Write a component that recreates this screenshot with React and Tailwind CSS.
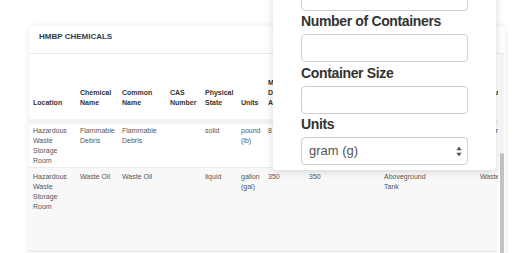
import React from "react";

const W = [
  "w-[47px]",
  "w-[42px]",
  "w-[48px]",
  "w-[35px]",
  "w-[36px]",
  "w-[27px]",
  "w-[41px]",
  "w-[35px]",
  "w-[40px]",
  "w-[52px]",
  "w-[44px]",
  "w-[80px]",
];

const headers = [
  "Location",
  "Chemical Name",
  "Common Name",
  "CAS Number",
  "Physical State",
  "Units",
  "Maximum Daily Amount",
  "Average Daily Amount",
  "Largest Container",
  "Type of Storage",
  "Storage Pressure",
  "Hazardous Materials ID",
];

const rows = [
  [
    "Hazardous Waste Storage Room",
    "Flammable Debris",
    "Flammable Debris",
    "",
    "solid",
    "pound (lb)",
    "8",
    "8",
    "",
    "Aboveground Tank",
    "",
    "Flammable Debris",
  ],
  [
    "Hazardous Waste Storage Room",
    "Waste Oil",
    "Waste Oil",
    "",
    "liquid",
    "gallon (gal)",
    "350",
    "350",
    "",
    "Aboveground Tank",
    "",
    "Waste Oil",
  ],
];

function Label({ children }) {
  return (
    <div className="h-[17px] leading-[17px] text-[14px] font-bold tracking-[-0.35px] text-[#333] mb-[4px]">
      {children}
    </div>
  );
}

function Field({ label }) {
  return (
    <div className="mt-[2.5px]">
      <Label>{label}</Label>
      <div className="h-[28px] rounded-[4px] border border-[#cfcfcf] bg-white" />
    </div>
  );
}

export default function App() {
  return (
    <div
      className="relative w-[525px] h-[253px] overflow-hidden bg-white"
      style={{ fontFamily: '"Liberation Sans", Arial, sans-serif' }}
    >
      <div className="ml-[29px] mt-[26px] w-[476px] rounded-[4px] bg-white shadow-[0_0_6px_rgba(0,0,0,0.09)]">
        <div className="h-[28px] pl-[10px] pt-[6px] border-b border-[#e0f2e6]">
          <div className="text-[8px] leading-[10px] font-bold text-[#2c3e50]">
            HMBP CHEMICALS
          </div>
        </div>
        <div className="flex">
          <div className="w-[469px] overflow-hidden">
            <div className="w-[527px]">
              <div className="flex h-[65px] border-b-[5px] border-[#f3f3f3] box-content">
                {headers.map((h, i) => (
                  <div
                    key={i}
                    className={`${W[i]} shrink-0 flex items-end pl-[4px] pr-[2px] pb-[11px] text-[7px] leading-[10px] font-bold text-[#333]`}
                  >
                    <div>{h}</div>
                  </div>
                ))}
              </div>
              <div className="flex h-[43px] border-b border-[#ececec] box-content bg-white">
                {rows[0].map((c, i) => (
                  <div
                    key={i}
                    className={`${W[i]} shrink-0 pl-[4px] pr-[2px] pt-[2px] text-[7px] leading-[10px] text-[#555]`}
                  >
                    {c}
                  </div>
                ))}
              </div>
              <div className="flex h-[83px] border-b border-[#e6e6e6] box-content bg-[#f8f8f8]">
                {rows[1].map((c, i) => (
                  <div
                    key={i}
                    className={`${W[i]} shrink-0 pl-[4px] pr-[2px] pt-[4px] text-[7px] leading-[10px] text-[#555]`}
                  >
                    {c}
                  </div>
                ))}
              </div>
              <div className="h-[20px]" />
            </div>
          </div>
          <div className="w-[2px]" />
          <div className="w-[4px] bg-[#f6f6f6] pt-[99px]">
            <div className="h-[120px] rounded-[2px] bg-[#c2c2c2]" />
          </div>
        </div>
      </div>

      <div className="absolute left-[273px] top-[-17.5px] w-[223px] rounded-[4px] bg-white px-[28px] pb-[5px] shadow-[0_1px_8px_rgba(0,0,0,0.16)]">
        <div className="h-[28px] rounded-[4px] border border-[#cfcfcf] bg-white" />
        <Field label="Number of Containers" />
        <Field label="Container Size" />
        <div className="mt-[2.5px]">
          <Label>Units</Label>
          <div className="h-[28px] rounded-[4px] border border-[#cfcfcf] bg-white flex items-center justify-between pl-[7px] pr-[5px]">
            <span className="text-[13px] text-[#555]">gram (g)</span>
            <svg width="6" height="11" viewBox="0 0 6 11">
              <path d="M3 0.5 L5.6 4.3 L0.4 4.3 Z" fill="#555" />
              <path d="M3 10.5 L5.6 6.7 L0.4 6.7 Z" fill="#555" />
            </svg>
          </div>
        </div>
      </div>
    </div>
  );
}
